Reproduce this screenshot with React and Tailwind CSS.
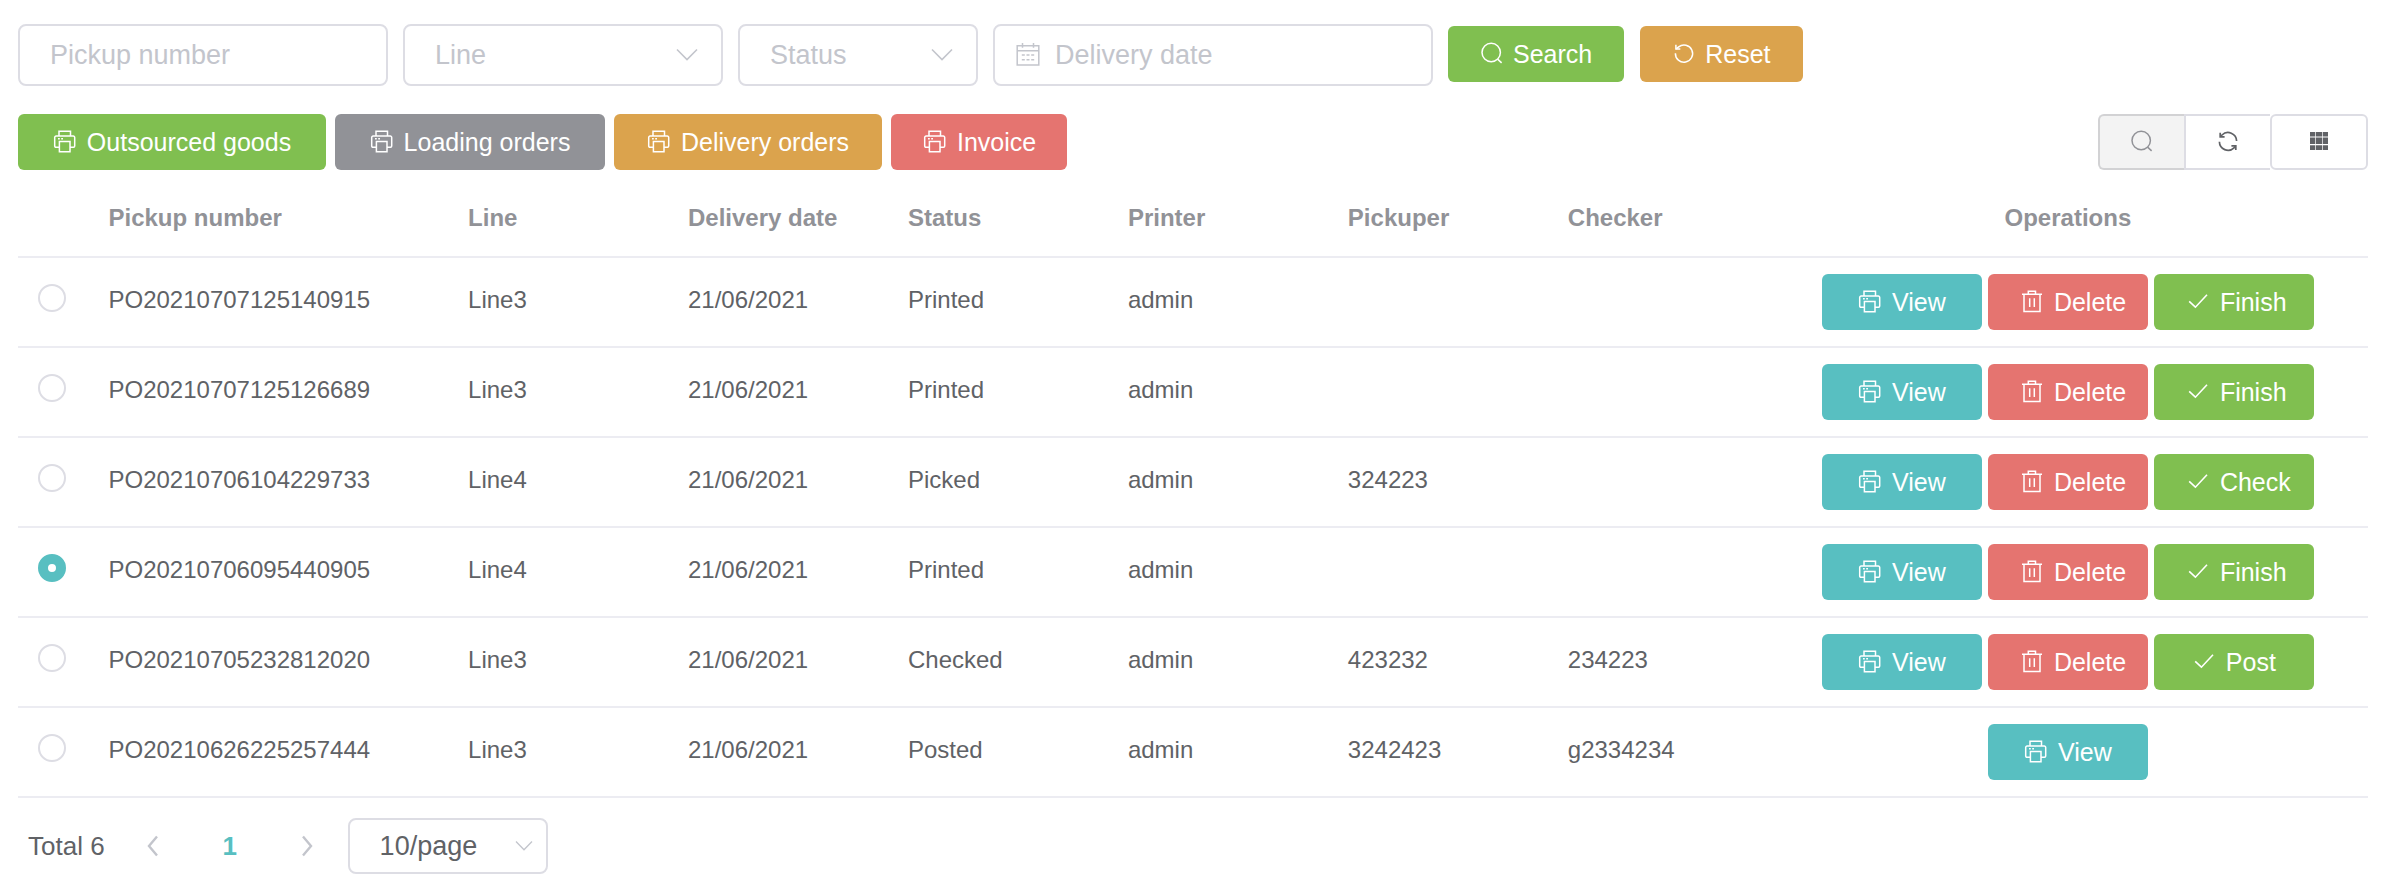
import { useState } from "react";

function Svg({ children, className = "h-6 w-6", strokeWidth = 1.5 }) {
  return (
    <svg
      viewBox="0 0 24 24"
      fill="none"
      stroke="currentColor"
      strokeWidth={strokeWidth}
      className={`shrink-0 ${className}`}
      aria-hidden="true"
    >
      {children}
    </svg>
  );
}

const PrinterIcon = () => (
  <Svg strokeWidth={1.5}>
    <path d="M6 6V1.200h11.500V6" />
    <path d="M6.400 17.200H2.900a1.200 1.200 0 0 1-1.200-1.200V7.400a1.400 1.400 0 0 1 1.400-1.400h17.200a1.400 1.400 0 0 1 1.400 1.400v8.600a1.200 1.200 0 0 1-1.200 1.200h-3.500" />
    <path d="M6.400 11.500h10.600v10.300H6.400z" />
    <path d="M5 8.800h1.800M8.200 8.800h1.800" />
  </Svg>
);

const SearchIcon = () => (
  <Svg>
    <circle cx="11.2" cy="10.500" r="9.2" />
    <path d="M17.6 17.100l4 3.8" />
  </Svg>
);

const ResetIcon = () => (
  <Svg>
    <path d="M3.4 11.200a8.6 8.6 0 1 0 3.3-6.4L4 6.9" />
    <path d="M3.9 2.8v4.3h4.4" />
  </Svg>
);

const RefreshIcon = () => (
  <Svg strokeWidth={1.7}>
    <path d="M20.6 11A8.6 8.6 0 0 0 6 5L4.4 6.6" />
    <path d="M4.2 2.700v4.2h4.4" />
    <path d="M3.4 11.800A8.6 8.6 0 0 0 18 17.800l1.600-1.600" />
    <path d="M19.800 20.100v-4.200h-4.400" />
  </Svg>
);

const GridIcon = () => (
  <svg viewBox="0 0 24 24" fill="currentColor" className="h-6 w-6 shrink-0" aria-hidden="true">
    <path d="M3 2h5.300v4.500H3zM9 2h6v4.500H9zM15.700 2H21v4.500h-5.300zM3 7.500h5.300v6.500H3zM9 7.500h6v6.500H9zM15.700 7.500H21v6.500h-5.300zM3 15.200h5.300V20H3zM9 15.200h6V20H9zM15.700 15.200H21V20h-5.300z" />
  </svg>
);

const TrashIcon = () => (
  <Svg strokeWidth={1.5}>
    <path d="M2 4.200h20M8.300 4.200V1.200h7.200v3M4 4.200v17.300h16V4.200M9.700 8.300v8.600M14.300 8.300v8.600" />
  </Svg>
);

const CheckIcon = () => (
  <Svg strokeWidth={1.6}>
    <path d="M3.200 11.400l6.200 5.800L21 4.800" />
  </Svg>
);

const CalendarIcon = () => (
  <Svg strokeWidth={1.5}>
    <path d="M1.200 2.700h21.600v19.200H1.200zM1.200 7.700h21.600M6.500 0v4.700M17.500 0v4.700" />
    <path d="M5.800 12h3M10.500 12h3M15.200 12h3M5.800 16.800h3M10.500 16.800h3M15.200 16.800h3" />
  </Svg>
);

const ChevronDown = ({ small }) => (
  <Svg strokeWidth={small ? 1.3 : 1.6}>
    <path d={small ? "M4 7.500l8 8.300 8-8.300" : "M2 6.500l10 10L22 6.500"} />
  </Svg>
);

const tones = {
  green: "bg-[#80bf50]",
  gray: "bg-[#919297]",
  orange: "bg-[#dba34d]",
  red: "bg-[#e57470]",
  teal: "bg-[#58bfc1]",
};

function Button({ tone, icon, children, className = "gap-[9px]" }) {
  return (
    <button
      type="button"
      className={`flex h-14 items-center rounded-md px-8 text-[25px] leading-8 whitespace-nowrap text-white [justify-content:safe_center] ${tones[tone]} ${className}`}
    >
      {icon}
      <span>{children}</span>
    </button>
  );
}

const rowButton = "w-40 gap-[10px]";

const field =
  "w-full rounded-lg border-2 border-[#dddde4] bg-white text-[27px] leading-8 outline-none placeholder:text-[#c3c5cc] placeholder:opacity-100";

function Select({ label, options, className, selectClass, small }) {
  return (
    <div className={`relative ${className}`}>
      <select aria-label={label} className={`${field} appearance-none pr-14 pl-[30px] ${selectClass}`}>
        {options.map((o) => (
          <option key={o}>{o}</option>
        ))}
      </select>
      <span
        className={`pointer-events-none absolute inset-y-0 flex items-center text-[#c3c5cc] ${small ? "right-3" : "right-6"}`}
      >
        <ChevronDown small={small} />
      </span>
    </div>
  );
}

const rows = [
  ["PO20210707125140915", "Line3", "21/06/2021", "Printed", "admin", "", "", "Finish"],
  ["PO20210707125126689", "Line3", "21/06/2021", "Printed", "admin", "", "", "Finish"],
  ["PO20210706104229733", "Line4", "21/06/2021", "Picked", "admin", "324223", "", "Check"],
  ["PO20210706095440905", "Line4", "21/06/2021", "Printed", "admin", "", "", "Finish"],
  ["PO20210705232812020", "Line3", "21/06/2021", "Checked", "admin", "423232", "234223", "Post"],
  ["PO20210626225257444", "Line3", "21/06/2021", "Posted", "admin", "3242423", "g2334234", null],
];

const headers = ["Pickup number", "Line", "Delivery date", "Status", "Printer", "Pickuper", "Checker"];

export default function App() {
  const [selected, setSelected] = useState("PO20210706095440905");

  return (
    <main className="bg-white pt-6 pr-4 pl-[18px] font-['Liberation_Sans',Arial,sans-serif] text-[#606266]">
      <form className="flex flex-wrap items-start gap-[15px]" onSubmit={(e) => e.preventDefault()}>
        <div className="w-[370px]">
          <input aria-label="Pickup number" placeholder="Pickup number" className={`${field} h-[62px] px-[30px]`} />
        </div>
        <Select label="Line" options={["Line"]} className="w-80" selectClass="h-[62px] text-[#c3c5cc]" />
        <Select label="Status" options={["Status"]} className="w-60" selectClass="h-[62px] text-[#c3c5cc]" />
        <div className="relative w-[440px]">
          <span className="pointer-events-none absolute inset-y-0 left-[23px] flex items-center text-[#c3c5cc]">
            <CalendarIcon />
          </span>
          <input
            aria-label="Delivery date"
            placeholder="Delivery date"
            className={`${field} h-[62px] pr-[30px] pl-[60px]`}
          />
        </div>
        <div className="flex gap-4 pt-[2px]">
          <Button tone="green" icon={<SearchIcon />}>Search</Button>
          <Button tone="orange" icon={<ResetIcon />}>Reset</Button>
        </div>
      </form>

      <div className="mt-7 flex items-center justify-between">
        <div className="flex gap-[9px]">
          <Button tone="green" icon={<PrinterIcon />} className="w-[308px] gap-[10px]">Outsourced goods</Button>
          <Button tone="gray" icon={<PrinterIcon />} className="w-[270px] gap-[10px]">Loading orders</Button>
          <Button tone="orange" icon={<PrinterIcon />} className="w-[268px] gap-[10px]">Delivery orders</Button>
          <Button tone="red" icon={<PrinterIcon />} className="w-[176px] gap-[10px]">Invoice</Button>
        </div>
        <div className="flex">
          <button
            type="button"
            aria-label="Toggle search"
            className="flex h-14 w-[86px] items-center justify-center rounded-l-md border-2 border-r-0 border-[#d2d2d4] bg-[#f3f3f3] text-[#919297]"
          >
            <SearchIcon />
          </button>
          <button
            type="button"
            aria-label="Refresh"
            className="flex h-14 w-[86px] items-center justify-center border-2 border-r-0 border-[#dddde4] bg-white"
          >
            <RefreshIcon />
          </button>
          <button
            type="button"
            aria-label="Columns"
            className="flex h-14 w-[98px] items-center justify-center rounded-md border-2 border-[#dddde4] bg-white"
          >
            <GridIcon />
          </button>
        </div>
      </div>

      <table className="mt-[7px] w-full table-fixed border-collapse text-left text-2xl">
        <colgroup>
          <col className="w-[3%]" />
          <col className="w-[15.3%]" />
          {headers.slice(1).map((h) => (
            <col key={h} className="w-[9.36%]" />
          ))}
          <col />
        </colgroup>
        <thead>
          <tr className="h-20 border-b-2 border-[#ececf2] text-[#919297]">
            <th aria-label="Selected" />
            {headers.map((h) => (
              <th key={h} className="px-5 pt-[2px] font-bold">{h}</th>
            ))}
            <th className="pt-[2px] text-center font-bold">Operations</th>
          </tr>
        </thead>
        <tbody>
          {rows.map(([id, ...rest]) => {
            const action = rest[6];
            return (
              <tr key={id} className="h-[90px] border-b-2 border-[#ececf2]">
                <td className="pb-2 pl-5">
                  <input
                    type="radio"
                    name="pickup"
                    aria-label={id}
                    checked={selected === id}
                    onChange={() => setSelected(id)}
                    className="block h-7 w-7 appearance-none rounded-full border-2 border-[#dddde4] bg-white checked:border-[10px] checked:border-[#58bfc1]"
                  />
                </td>
                <td className="px-5 pb-1">{id}</td>
                {rest.slice(0, 6).map((v, i) => (
                  <td key={i} className="px-5 pb-1">{v}</td>
                ))}
                <td>
                  <div className="flex justify-center gap-[6px]">
                    <Button tone="teal" icon={<PrinterIcon />} className={rowButton}>View</Button>
                    {action && <Button tone="red" icon={<TrashIcon />} className={rowButton}>Delete</Button>}
                    {action && <Button tone="green" icon={<CheckIcon />} className={rowButton}>{action}</Button>}
                  </div>
                </td>
              </tr>
            );
          })}
        </tbody>
      </table>

      <nav aria-label="Pagination" className="mt-5 flex items-center pl-[10px] text-[26px] leading-8">
        <span>Total 6</span>
        <button type="button" aria-label="Previous page" className="ml-[14px] flex h-14 w-[68px] items-center justify-center text-[#c3c5cc]">
          <Svg strokeWidth={2.4}><path d="M16 2.500L8 12l8 9.500" /></Svg>
        </button>
        <button type="button" aria-current="page" className="h-14 w-[86px] font-bold text-[#58bfc1]">1</button>
        <button type="button" aria-label="Next page" className="flex h-14 w-[68px] items-center justify-center text-[#c3c5cc]">
          <Svg strokeWidth={2.4}><path d="M8 2.500l8 9.500-8 9.500" /></Svg>
        </button>
        <Select small label="Page size" options={["10/page"]} className="ml-[7px] w-[200px]" selectClass="h-14" />
      </nav>
    </main>
  );
}
